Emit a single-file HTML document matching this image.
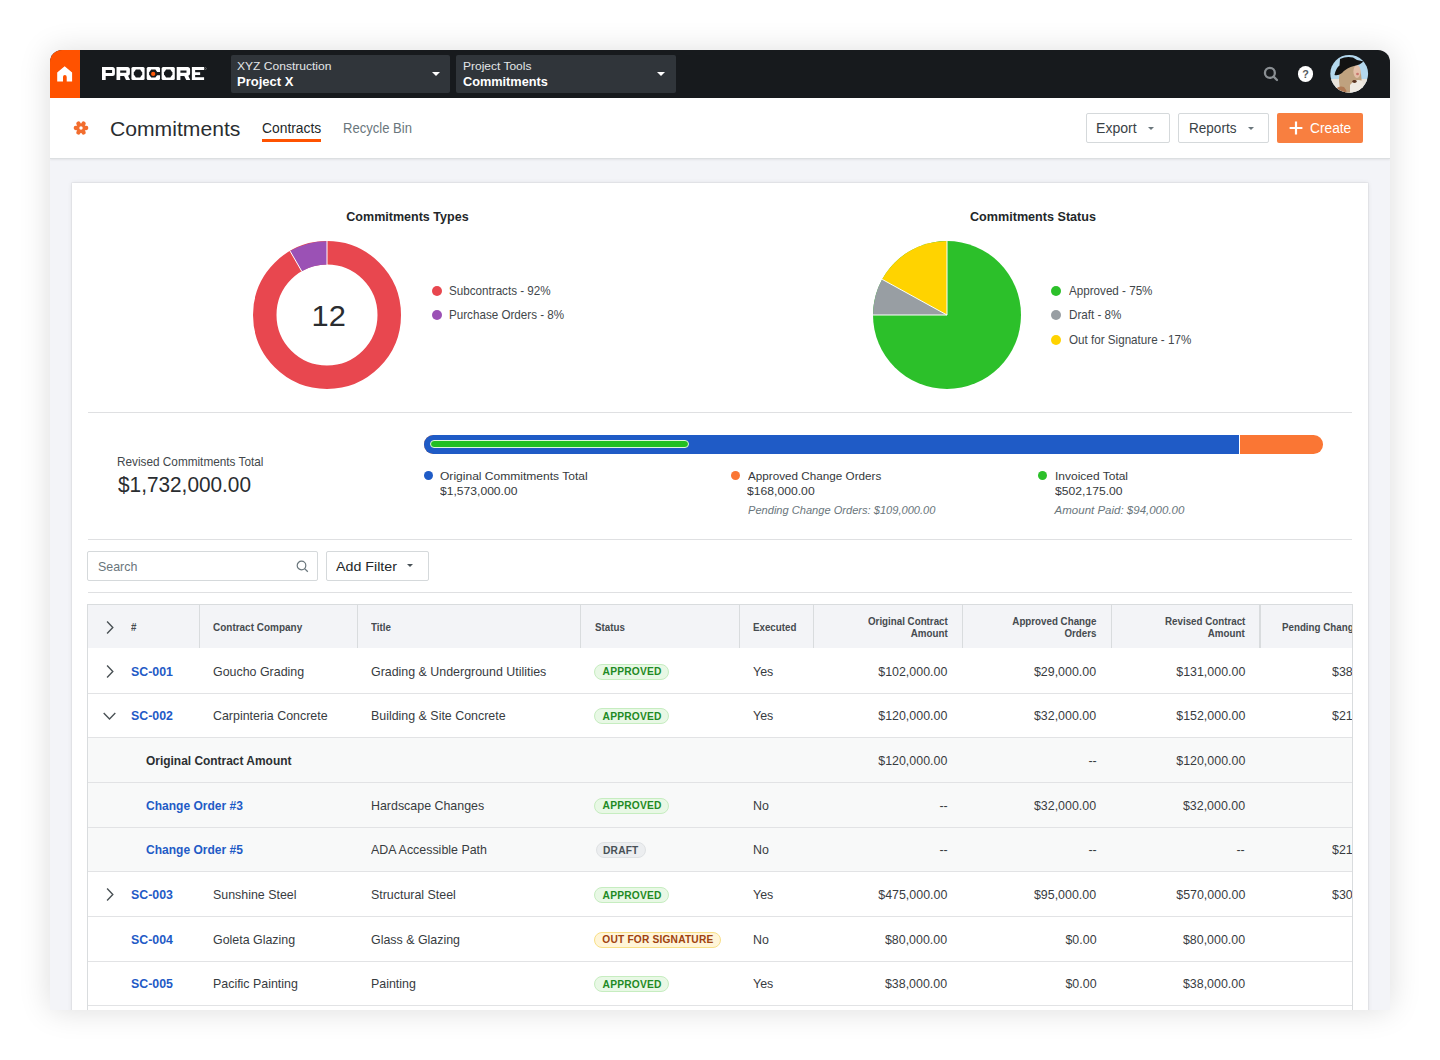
<!DOCTYPE html>
<html><head><meta charset="utf-8">
<style>
*{box-sizing:border-box;margin:0;padding:0}
html,body{width:1440px;height:1060px;overflow:hidden;background:#fff;font-family:"Liberation Sans",sans-serif;color:#232729}
.a{position:absolute;white-space:nowrap}
.t{line-height:1}
.dot{border-radius:50%}
#shadow{position:absolute;left:50px;top:50px;width:1340px;height:958px;background:#f4f5f7;box-shadow:0 2px 30px rgba(0,0,0,.14)}
#clip{position:absolute;left:0;top:0;width:1440px;height:1060px;clip-path:inset(50px 50px 50px 50px round 12px 12px 0 0)}

</style></head>
<body>
<div id="shadow"></div>
<div id="clip">
<div class="a" style="left:50.00px;top:50.00px;width:1340.00px;height:960.00px;background:#f3f4f8"></div>
<div class="a" style="left:50.00px;top:50.00px;width:1340.00px;height:48.00px;background:#171a1d"></div>
<div class="a" style="left:50.00px;top:50.00px;width:30.00px;height:48.00px;background:#ff5200"></div>
<svg class="a" style="left:57px;top:66px" width="16" height="16" viewBox="0 0 16 16"><path d="M7.65 0.2 L15.1 6.5 V15.4 H9.7 V11 Q9.7 9.1 7.85 9.1 Q6 9.1 6 11 V15.4 H0.2 V6.5 Z" fill="#fff"/></svg>
<svg class="a" style="left:101.9px;top:66.9px" width="106" height="14" viewBox="0 0 106 14"><g fill="#fff"><path fill-rule="evenodd" d="M0 0H10.4Q12.9 0 12.9 2.5V6.4Q12.9 8.9 10.4 8.9H3.7V13.1H0Z M3.7 3.1V6H10.1V3.1Z"/><path fill-rule="evenodd" transform="translate(14.5 0)" d="M0 0H10.9Q13.4 0 13.4 2.5V6.2Q13.4 8.2 11.6 8.8L13.6 13.1H9.5L7.6 9H3.7V13.1H0Z M3.7 3.4V5.8H9.8V3.4Z"/><path transform="translate(29.4 0)" d="M1.5 0H11.7Q13.2 0 13.2 1.5V11.6Q13.2 13.1 11.7 13.1H1.5Q0 13.1 0 11.6V1.5Q0 0 1.5 0Z"/><path transform="translate(44.7 0)" d="M1.5 0H11.8Q13.3 0 13.3 1.5V11.6Q13.3 13.1 11.8 13.1H1.5Q0 13.1 0 11.6V1.5Q0 0 1.5 0Z"/><path transform="translate(59.6 0)" d="M1.5 0H11.7Q13.2 0 13.2 1.5V11.6Q13.2 13.1 11.7 13.1H1.5Q0 13.1 0 11.6V1.5Q0 0 1.5 0Z"/><path fill-rule="evenodd" transform="translate(74.7 0)" d="M0 0H10.9Q13.4 0 13.4 2.5V6.2Q13.4 8.2 11.6 8.8L13.6 13.1H9.5L7.6 9H3.7V13.1H0Z M3.7 3.4V5.8H9.8V3.4Z"/><path transform="translate(89.85 0)" d="M0 0H12.25V3H3.3V5.3H8.3V7.9H3.3V10.3H12.25V13.1H0Z"/></g><g fill="#171a1d"><path transform="translate(29.4 0)" d="M4.5 2.6L2.4 5.6V7.5L4.5 10.5H8.7L10.8 7.5V5.6L8.7 2.6Z"/><path transform="translate(44.7 0)" d="M4.5 2.6L2.4 5.6V7.5L4.5 10.5H8.7L10.8 7.5V5.6L8.7 2.6Z"/><path transform="translate(44.7 0)" d="M8.6 4.9H13.4V8.2H8.6Z"/><path transform="translate(59.6 0)" d="M4.5 2.6L2.4 5.6V7.5L4.5 10.5H8.7L10.8 7.5V5.6L8.7 2.6Z"/></g><circle cx="51.2" cy="6.9" r="2.15" fill="#ff5a0a"/><circle cx="103.4" cy="1.6" r="1" fill="none" stroke="#999" stroke-width="0.5"/></svg>
<div class="a" style="left:231.00px;top:55.00px;width:219.00px;height:37.50px;background:#30353a;border-radius:2px"></div>
<div class="a t" style="left:237.38px;top:61.00px;font-size:11.5px;color:#e3e6e8;transform:scaleX(1.0479);transform-origin:left">XYZ Construction</div>
<div class="a t" style="left:237.32px;top:75.00px;font-size:13.3px;color:#fff;font-weight:bold;transform:scaleX(0.9775);transform-origin:left">Project X</div>
<div class="a" style="left:431.50px;top:72.00px;width:0;height:0;border-left:4.0px solid transparent;border-right:4.0px solid transparent;border-top:4px solid #fff"></div>
<div class="a" style="left:456.00px;top:55.00px;width:219.50px;height:37.50px;background:#30353a;border-radius:2px"></div>
<div class="a t" style="left:462.98px;top:61.00px;font-size:11.5px;color:#e3e6e8;transform:scaleX(1.0426);transform-origin:left">Project Tools</div>
<div class="a t" style="left:462.94px;top:75.00px;font-size:13.3px;color:#fff;font-weight:bold;transform:scaleX(0.9566);transform-origin:left">Commitments</div>
<div class="a" style="left:656.50px;top:72.00px;width:0;height:0;border-left:4.0px solid transparent;border-right:4.0px solid transparent;border-top:4px solid #fff"></div>
<svg class="a" style="left:1262px;top:65px" width="18" height="18" viewBox="0 0 18 18"><circle cx="7.9" cy="7.9" r="4.95" fill="none" stroke="#8a8f93" stroke-width="2.3"/><path d="M11.6 11.6 L15 15" stroke="#8a8f93" stroke-width="2.3" stroke-linecap="round"/></svg>
<div class="a" style="left:1297.7px;top:66.2px;width:15.6px;height:15.6px;border-radius:50%;background:#fff"></div>
<div class="a t" style="left:1302.30px;top:69.00px;font-size:10.8px;color:#55595d;font-weight:bold">?</div>
<svg class="a" style="left:1326px;top:51px" width="46" height="46" viewBox="0 0 46 46"><defs><clipPath id="av"><circle cx="23.2" cy="22.8" r="18.9"/></clipPath></defs><g clip-path="url(#av)"><rect width="46" height="46" fill="#b3d8ee"/><rect y="28" width="46" height="18" fill="#e9e3da"/><path d="M13 27 Q13 17 21 14 Q30 12 34 19 Q37 28 34 35 Q29 42 21 42 Q13 40 13 30 Z" fill="#bfa27f"/><path d="M8 40 Q12 34 18 36 Q22 40 20 46 H8Z" fill="#b07a55"/><ellipse cx="31" cy="20.5" rx="3.6" ry="6.5" fill="#e3bfa8"/><ellipse cx="31.5" cy="23" rx="1.4" ry="1.2" fill="#c9756d"/><path d="M24 34 Q30 27 36 30 Q40 38 38 46 H24Z" fill="#efeae2"/><ellipse cx="28.5" cy="30.5" rx="2.2" ry="1.4" fill="#5a3420"/><path d="M8.5 24 Q10 17 13.5 14.5 L14 8 Q20 5 27 6.5 L31 9 Q35 9.5 37.5 10.5 Q34 14 28 15 Q21 16.5 16 22 Q12 25 8.5 24 Z" fill="#121212"/></g></svg>
<div class="a" style="left:50.00px;top:98.00px;width:1340.00px;height:60.80px;background:#fff;border-bottom:1px solid #dcdfe1;box-shadow:0 1px 2px rgba(0,0,0,.07)"></div>
<svg class="a" style="left:72.6px;top:119.9px" width="16" height="16" viewBox="0 0 16 16"><circle cx="8" cy="8" r="4" fill="#f26d2e"/><path d="M8 8L13.20 8.00M8 8L10.60 12.50M8 8L5.40 12.50M8 8L2.80 8.00M8 8L5.40 3.50M8 8L10.60 3.50" stroke="#f26d2e" stroke-width="4.3" stroke-linecap="round"/><circle cx="8" cy="8" r="1.7" fill="#fff"/></svg>
<div class="a t" style="left:109.73px;top:119.00px;font-size:20.5px;color:#2a2d30;transform:scaleX(1.0308);transform-origin:left">Commitments</div>
<div class="a t" style="left:261.77px;top:122.00px;font-size:13.8px;color:#232729;transform:scaleX(1.0036);transform-origin:left">Contracts</div>
<div class="a" style="left:262.00px;top:139.00px;width:59.00px;height:2.60px;background:#ff5200"></div>
<div class="a t" style="left:342.72px;top:122.00px;font-size:13.8px;color:#6a767c;transform:scaleX(0.9466);transform-origin:left">Recycle Bin</div>
<div class="a" style="left:1086.40px;top:113.00px;width:83.60px;height:30.00px;background:#fff;border:1px solid #d5d9db;border-radius:2px"></div>
<div class="a t" style="left:1096.16px;top:122.00px;font-size:13.8px;color:#3a4246;transform:scaleX(1.0204);transform-origin:left">Export</div>
<div class="a" style="left:1148.10px;top:126.75px;width:0;height:0;border-left:3.5px solid transparent;border-right:3.5px solid transparent;border-top:3.5px solid #6a767c"></div>
<div class="a" style="left:1178.20px;top:113.00px;width:91.30px;height:30.00px;background:#fff;border:1px solid #d5d9db;border-radius:2px"></div>
<div class="a t" style="left:1188.89px;top:122.00px;font-size:13.8px;color:#3a4246;transform:scaleX(0.9816);transform-origin:left">Reports</div>
<div class="a" style="left:1247.80px;top:126.75px;width:0;height:0;border-left:3.5px solid transparent;border-right:3.5px solid transparent;border-top:3.5px solid #6a767c"></div>
<div class="a" style="left:1277.20px;top:113.00px;width:85.50px;height:30.00px;background:#f87f40;border-radius:2px"></div>
<svg class="a" style="left:1289px;top:121px" width="14" height="14" viewBox="0 0 14 14"><path d="M7 0.6V13.4M0.6 7H13.4" stroke="#fff" stroke-width="2.2"/></svg>
<div class="a t" style="left:1310.18px;top:122.00px;font-size:13.8px;color:#fff;transform:scaleX(0.9958);transform-origin:left">Create</div>
<div class="a" style="left:72.00px;top:182.60px;width:1296.00px;height:847.40px;background:#fff;box-shadow:0 0 0 0.6px rgba(0,0,0,.06),0 0 5px rgba(0,0,0,.09)"></div>
<div class="a t" style="left:344.15px;top:210.00px;font-size:13px;color:#232729;font-weight:bold;transform:scaleX(0.9637);transform-origin:center">Commitments Types</div>
<svg class="a" style="left:253.2px;top:240.7px" width="148" height="148" viewBox="0 0 148 148"><circle cx="74" cy="74" r="62.25" fill="none" stroke="#e8474f" stroke-width="23.5"/><path d="M37.10 10.09 A73.8 73.8 0 0 1 74 0.2 L74 23.5 A50.5 50.5 0 0 0 48.75 30.27 Z" fill="#9b51b5"/><path d="M74 0V24 M37.10 10.09 L48.75 30.27" stroke="#fff" stroke-width="1"/></svg>
<div class="a t" style="left:311.61px;top:301.00px;font-size:30px;color:#2a2d30;transform:scaleX(1.0277);transform-origin:center">12</div>
<div class="a" style="left:431.60px;top:285.70px;width:10.20px;height:10.20px;border-radius:50%;background:#e8474f"></div>
<div class="a t" style="left:448.70px;top:285.00px;font-size:12.2px;color:#42474b;transform:scaleX(0.9562);transform-origin:left">Subcontracts - 92%</div>
<div class="a" style="left:431.60px;top:309.90px;width:10.20px;height:10.20px;border-radius:50%;background:#9b51b5"></div>
<div class="a t" style="left:448.70px;top:309.00px;font-size:12.2px;color:#42474b;transform:scaleX(0.9550);transform-origin:left">Purchase Orders - 8%</div>
<div class="a t" style="left:967.98px;top:210.00px;font-size:13px;color:#232729;font-weight:bold;transform:scaleX(0.9691);transform-origin:center">Commitments Status</div>
<svg class="a" style="left:872.8px;top:240.7px" width="148" height="148" viewBox="0 0 148 148"><circle cx="74" cy="74" r="74" fill="#2cc02a"/><path d="M74 74 L0.00 74.00 A74 74 0 0 1 9.15 38.35 Z" fill="#989ea3"/><path d="M74 74 L9.15 38.35 A74 74 0 0 1 74 0 Z" fill="#ffd300"/><path d="M74 0V74H0 M74 74 L9.15 38.35" stroke="#fff" stroke-width="1" fill="none"/></svg>
<div class="a" style="left:1050.90px;top:285.70px;width:10.20px;height:10.20px;border-radius:50%;background:#2cc02a"></div>
<div class="a t" style="left:1068.70px;top:285.00px;font-size:12.2px;color:#42474b;transform:scaleX(0.9550);transform-origin:left">Approved - 75%</div>
<div class="a" style="left:1050.90px;top:309.90px;width:10.20px;height:10.20px;border-radius:50%;background:#989ea3"></div>
<div class="a t" style="left:1068.70px;top:309.00px;font-size:12.2px;color:#42474b;transform:scaleX(0.9550);transform-origin:left">Draft - 8%</div>
<div class="a" style="left:1050.90px;top:334.90px;width:10.20px;height:10.20px;border-radius:50%;background:#ffd300"></div>
<div class="a t" style="left:1068.70px;top:334.00px;font-size:12.2px;color:#42474b;transform:scaleX(0.9550);transform-origin:left">Out for Signature - 17%</div>
<div class="a" style="left:88.00px;top:411.80px;width:1264.00px;height:1.00px;background:#dfe0e2"></div>
<div class="a t" style="left:116.59px;top:456.00px;font-size:12.2px;color:#42474b;transform:scaleX(0.9664);transform-origin:left">Revised Commitments Total</div>
<div class="a t" style="left:117.95px;top:475.00px;font-size:21.5px;color:#2a2d30;transform:scaleX(0.9672);transform-origin:left">$1,732,000.00</div>
<div class="a" style="left:424.4px;top:435px;width:898.4px;height:18.7px;border-radius:9.35px;background:#fa7634;overflow:hidden"><div class="a" style="left:0;top:0;width:815.6px;height:18.7px;background:#1f5bc6;border-right:1.2px solid #fff"></div><div class="a" style="left:5.2px;top:5.3px;width:259.3px;height:8px;border-radius:4px;background:#22bf22;border:1px solid #dff7dc"></div></div>
<div class="a" style="left:424.00px;top:470.60px;width:9.20px;height:9.20px;border-radius:50%;background:#1f5bc6"></div>
<div class="a t" style="left:440.38px;top:471.00px;font-size:11.8px;color:#35393c;transform:scaleX(1.0209);transform-origin:left">Original Commitments Total</div>
<div class="a t" style="left:440.37px;top:486.00px;font-size:11.8px;color:#35393c;transform:scaleX(1.0265);transform-origin:left">$1,573,000.00</div>
<div class="a" style="left:731.10px;top:470.60px;width:9.20px;height:9.20px;border-radius:50%;background:#fa7634"></div>
<div class="a t" style="left:747.50px;top:471.00px;font-size:11.8px;color:#35393c;transform:scaleX(0.9916);transform-origin:left">Approved Change Orders</div>
<div class="a t" style="left:747.47px;top:486.00px;font-size:11.8px;color:#35393c;transform:scaleX(1.0313);transform-origin:left">$168,000.00</div>
<div class="a t" style="left:747.53px;top:505.00px;font-size:11.5px;color:#6a767c;font-style:italic;transform:scaleX(0.9643);transform-origin:left">Pending Change Orders: $109,000.00</div>
<div class="a" style="left:1038.20px;top:470.60px;width:9.20px;height:9.20px;border-radius:50%;background:#2cc02a"></div>
<div class="a t" style="left:1054.58px;top:471.00px;font-size:11.8px;color:#35393c;transform:scaleX(1.0155);transform-origin:left">Invoiced Total</div>
<div class="a t" style="left:1054.57px;top:486.00px;font-size:11.8px;color:#35393c;transform:scaleX(1.0297);transform-origin:left">$502,175.00</div>
<div class="a t" style="left:1054.61px;top:505.00px;font-size:11.5px;color:#6a767c;font-style:italic">Amount Paid: $94,000.00</div>
<div class="a" style="left:88.00px;top:539.10px;width:1264.00px;height:1.00px;background:#dfe0e2"></div>
<div class="a" style="left:87.20px;top:551.20px;width:230.60px;height:29.60px;background:#fff;border:1px solid #d5d9db;border-radius:2px"></div>
<div class="a t" style="left:97.96px;top:560.00px;font-size:13px;color:#6a767c;transform:scaleX(0.9550);transform-origin:left">Search</div>
<svg class="a" style="left:296px;top:559.5px" width="13" height="13" viewBox="0 0 13 13"><circle cx="5.5" cy="5.5" r="4.3" fill="none" stroke="#6a767c" stroke-width="1.2"/><path d="M8.6 8.6L11.8 11.8" stroke="#6a767c" stroke-width="1.3"/></svg>
<div class="a" style="left:325.80px;top:551.20px;width:103.50px;height:29.60px;background:#fff;border:1px solid #d5d9db;border-radius:2px"></div>
<div class="a t" style="left:335.55px;top:560.00px;font-size:13px;color:#232729;transform:scaleX(1.0947);transform-origin:left">Add Filter</div>
<div class="a" style="left:406.70px;top:564.25px;width:0;height:0;border-left:3.5px solid transparent;border-right:3.5px solid transparent;border-top:3.5px solid #485156"></div>
<div class="a" style="left:88.00px;top:592.00px;width:1264.00px;height:1.00px;background:#dfe0e2"></div>
<div class="a" style="left:88.00px;top:605.00px;width:1264.00px;height:43.40px;background:#f3f4f7"></div>
<div class="a" style="left:87.00px;top:604.00px;width:1265.50px;height:1.00px;background:#d9dcde"></div>
<div class="a" style="left:87.00px;top:605.00px;width:1.00px;height:405.00px;background:#d9dcde"></div>
<div class="a" style="left:1351.50px;top:605.00px;width:1.00px;height:405.00px;background:#d9dcde"></div>
<div class="a" style="left:88.00px;top:647.80px;width:1264.00px;height:1.20px;background:#d9dcde"></div>
<div class="a" style="left:198.70px;top:605.00px;width:1.20px;height:43.40px;background:#d9dcde"></div>
<div class="a" style="left:356.70px;top:605.00px;width:1.20px;height:43.40px;background:#d9dcde"></div>
<div class="a" style="left:580.30px;top:605.00px;width:1.20px;height:43.40px;background:#d9dcde"></div>
<div class="a" style="left:738.50px;top:605.00px;width:1.20px;height:43.40px;background:#d9dcde"></div>
<div class="a" style="left:812.70px;top:605.00px;width:1.20px;height:43.40px;background:#d9dcde"></div>
<div class="a" style="left:961.60px;top:605.00px;width:1.20px;height:43.40px;background:#d9dcde"></div>
<div class="a" style="left:1110.50px;top:605.00px;width:1.20px;height:43.40px;background:#d9dcde"></div>
<div class="a" style="left:1259.40px;top:605.00px;width:1.20px;height:43.40px;background:#d9dcde"></div>
<svg class="a" style="left:105.50px;top:620.50px" width="8" height="13" viewBox="0 0 8 13"><path d="M1.1 0.6L6.8 6.5L1.1 12.4" fill="none" stroke="#4a5155" stroke-width="1.4"/></svg>
<div class="a t" style="left:131.21px;top:622.00px;font-size:10.5px;color:#464b4f;font-weight:bold;transform:scaleX(0.9300);transform-origin:left">#</div>
<div class="a t" style="left:213.20px;top:622.00px;font-size:10.5px;color:#464b4f;font-weight:bold;transform:scaleX(0.9495);transform-origin:left">Contract Company</div>
<div class="a t" style="left:371.41px;top:622.00px;font-size:10.5px;color:#464b4f;font-weight:bold;transform:scaleX(0.9300);transform-origin:left">Title</div>
<div class="a t" style="left:594.91px;top:622.00px;font-size:10.5px;color:#464b4f;font-weight:bold;transform:scaleX(0.9300);transform-origin:left">Status</div>
<div class="a t" style="left:753.21px;top:622.00px;font-size:10.5px;color:#464b4f;font-weight:bold;transform:scaleX(0.9300);transform-origin:left">Executed</div>
<div class="a t" style="left:861.52px;top:616.00px;font-size:10.5px;color:#464b4f;font-weight:bold;transform:scaleX(0.9300);transform-origin:right">Original Contract</div>
<div class="a t" style="left:907.61px;top:628.00px;font-size:10.5px;color:#464b4f;font-weight:bold;transform:scaleX(0.9300);transform-origin:right">Amount</div>
<div class="a t" style="left:1005.75px;top:616.00px;font-size:10.5px;color:#464b4f;font-weight:bold;transform:scaleX(0.9300);transform-origin:right">Approved Change</div>
<div class="a t" style="left:1061.75px;top:628.00px;font-size:10.5px;color:#464b4f;font-weight:bold;transform:scaleX(0.9300);transform-origin:right">Orders</div>
<div class="a t" style="left:1158.63px;top:616.00px;font-size:10.5px;color:#464b4f;font-weight:bold;transform:scaleX(0.9300);transform-origin:right">Revised Contract</div>
<div class="a t" style="left:1205.31px;top:628.00px;font-size:10.5px;color:#464b4f;font-weight:bold;transform:scaleX(0.9300);transform-origin:right">Amount</div>
<div class="a" style="left:88.00px;top:648.40px;width:1263.50px;height:44.67px;background:#fff"></div>
<svg class="a" style="left:105.60px;top:665.03px" width="8" height="13" viewBox="0 0 8 13"><path d="M1.1 0.6L6.8 6.5L1.1 12.4" fill="none" stroke="#4a5155" stroke-width="1.4"/></svg>
<div class="a t" style="left:131.06px;top:665.00px;font-size:13px;color:#1f5bc6;font-weight:bold;transform:scaleX(0.9502);transform-origin:left">SC-001</div>
<div class="a t" style="left:213.06px;top:665.00px;font-size:13px;color:#383c3f;transform:scaleX(0.9550);transform-origin:left">Goucho Grading</div>
<div class="a t" style="left:371.46px;top:665.00px;font-size:13px;color:#383c3f;transform:scaleX(0.9550);transform-origin:left">Grading &amp; Underground Utilities</div>
<div class="a" style="left:594.20px;top:663.63px;width:75.00px;height:16.00px;border-radius:8px;background:#e8f8e5;border:1px solid #c6edc0"></div>
<div class="a t" style="left:600.60px;top:666.00px;font-size:10.8px;color:#1f8a24;font-weight:bold;letter-spacing:0.2px;transform:scaleX(0.9490);transform-origin:center">APPROVED</div>
<div class="a t" style="left:753.06px;top:665.00px;font-size:13px;color:#383c3f;transform:scaleX(0.9550);transform-origin:left">Yes</div>
<div class="a t" style="left:875.15px;top:665.00px;font-size:13px;color:#383c3f;transform:scaleX(0.9550);transform-origin:right">$102,000.00</div>
<div class="a t" style="left:1031.27px;top:665.00px;font-size:13px;color:#383c3f;transform:scaleX(0.9550);transform-origin:right">$29,000.00</div>
<div class="a t" style="left:1172.85px;top:665.00px;font-size:13px;color:#383c3f;transform:scaleX(0.9550);transform-origin:right">$131,000.00</div>
<div class="a" style="left:88.00px;top:693.07px;width:1263.50px;height:44.67px;background:#fff"></div>
<svg class="a" style="left:103.20px;top:711.80px" width="13" height="8" viewBox="0 0 13 8"><path d="M0.7 1.1L6.5 6.9L12.3 1.1" fill="none" stroke="#4a5155" stroke-width="1.4"/></svg>
<div class="a t" style="left:131.06px;top:709.00px;font-size:13px;color:#1f5bc6;font-weight:bold;transform:scaleX(0.9502);transform-origin:left">SC-002</div>
<div class="a t" style="left:213.06px;top:709.00px;font-size:13px;color:#383c3f;transform:scaleX(0.9550);transform-origin:left">Carpinteria Concrete</div>
<div class="a t" style="left:371.46px;top:709.00px;font-size:13px;color:#383c3f;transform:scaleX(0.9550);transform-origin:left">Building &amp; Site Concrete</div>
<div class="a" style="left:594.20px;top:708.30px;width:75.00px;height:16.00px;border-radius:8px;background:#e8f8e5;border:1px solid #c6edc0"></div>
<div class="a t" style="left:600.60px;top:711.00px;font-size:10.8px;color:#1f8a24;font-weight:bold;letter-spacing:0.2px;transform:scaleX(0.9490);transform-origin:center">APPROVED</div>
<div class="a t" style="left:753.06px;top:709.00px;font-size:13px;color:#383c3f;transform:scaleX(0.9550);transform-origin:left">Yes</div>
<div class="a t" style="left:875.15px;top:709.00px;font-size:13px;color:#383c3f;transform:scaleX(0.9550);transform-origin:right">$120,000.00</div>
<div class="a t" style="left:1031.27px;top:709.00px;font-size:13px;color:#383c3f;transform:scaleX(0.9550);transform-origin:right">$32,000.00</div>
<div class="a t" style="left:1172.85px;top:709.00px;font-size:13px;color:#383c3f;transform:scaleX(0.9550);transform-origin:right">$152,000.00</div>
<div class="a" style="left:88.00px;top:737.74px;width:1263.50px;height:44.67px;background:#f8f9f9"></div>
<div class="a t" style="left:145.98px;top:754.00px;font-size:13px;color:#2b2f32;font-weight:bold;transform:scaleX(0.9181);transform-origin:left">Original Contract Amount</div>
<div class="a t" style="left:875.15px;top:754.00px;font-size:13px;color:#383c3f;transform:scaleX(0.9550);transform-origin:right">$120,000.00</div>
<div class="a t" style="left:1087.67px;top:754.00px;font-size:13px;color:#383c3f;transform:scaleX(0.9550);transform-origin:right">--</div>
<div class="a t" style="left:1172.85px;top:754.00px;font-size:13px;color:#383c3f;transform:scaleX(0.9550);transform-origin:right">$120,000.00</div>
<div class="a" style="left:88.00px;top:782.41px;width:1263.50px;height:44.67px;background:#f8f9f9"></div>
<div class="a t" style="left:145.88px;top:799.00px;font-size:13px;color:#1f5bc6;font-weight:bold;transform:scaleX(0.9244);transform-origin:left">Change Order #3</div>
<div class="a t" style="left:371.46px;top:799.00px;font-size:13px;color:#383c3f;transform:scaleX(0.9550);transform-origin:left">Hardscape Changes</div>
<div class="a" style="left:594.20px;top:797.64px;width:75.00px;height:16.00px;border-radius:8px;background:#e8f8e5;border:1px solid #c6edc0"></div>
<div class="a t" style="left:600.60px;top:800.00px;font-size:10.8px;color:#1f8a24;font-weight:bold;letter-spacing:0.2px;transform:scaleX(0.9490);transform-origin:center">APPROVED</div>
<div class="a t" style="left:753.06px;top:799.00px;font-size:13px;color:#383c3f;transform:scaleX(0.9550);transform-origin:left">No</div>
<div class="a t" style="left:938.77px;top:799.00px;font-size:13px;color:#383c3f;transform:scaleX(0.9550);transform-origin:right">--</div>
<div class="a t" style="left:1031.27px;top:799.00px;font-size:13px;color:#383c3f;transform:scaleX(0.9550);transform-origin:right">$32,000.00</div>
<div class="a t" style="left:1180.07px;top:799.00px;font-size:13px;color:#383c3f;transform:scaleX(0.9550);transform-origin:right">$32,000.00</div>
<div class="a" style="left:88.00px;top:827.08px;width:1263.50px;height:44.67px;background:#f8f9f9"></div>
<div class="a t" style="left:145.88px;top:843.00px;font-size:13px;color:#1f5bc6;font-weight:bold;transform:scaleX(0.9244);transform-origin:left">Change Order #5</div>
<div class="a t" style="left:371.46px;top:843.00px;font-size:13px;color:#383c3f;transform:scaleX(0.9550);transform-origin:left">ADA Accessible Path</div>
<div class="a" style="left:595.80px;top:842.31px;width:49.80px;height:16.00px;border-radius:8px;background:#eceef0;border:1px solid #dfe2e4"></div>
<div class="a t" style="left:601.90px;top:845.00px;font-size:10.8px;color:#485156;font-weight:bold;letter-spacing:0.2px;transform:scaleX(0.9422);transform-origin:center">DRAFT</div>
<div class="a t" style="left:753.06px;top:843.00px;font-size:13px;color:#383c3f;transform:scaleX(0.9550);transform-origin:left">No</div>
<div class="a t" style="left:938.77px;top:843.00px;font-size:13px;color:#383c3f;transform:scaleX(0.9550);transform-origin:right">--</div>
<div class="a t" style="left:1087.67px;top:843.00px;font-size:13px;color:#383c3f;transform:scaleX(0.9550);transform-origin:right">--</div>
<div class="a t" style="left:1236.47px;top:843.00px;font-size:13px;color:#383c3f;transform:scaleX(0.9550);transform-origin:right">--</div>
<div class="a" style="left:88.00px;top:871.75px;width:1263.50px;height:44.67px;background:#fff"></div>
<svg class="a" style="left:105.60px;top:888.38px" width="8" height="13" viewBox="0 0 8 13"><path d="M1.1 0.6L6.8 6.5L1.1 12.4" fill="none" stroke="#4a5155" stroke-width="1.4"/></svg>
<div class="a t" style="left:131.06px;top:888.00px;font-size:13px;color:#1f5bc6;font-weight:bold;transform:scaleX(0.9502);transform-origin:left">SC-003</div>
<div class="a t" style="left:213.06px;top:888.00px;font-size:13px;color:#383c3f;transform:scaleX(0.9550);transform-origin:left">Sunshine Steel</div>
<div class="a t" style="left:371.46px;top:888.00px;font-size:13px;color:#383c3f;transform:scaleX(0.9550);transform-origin:left">Structural Steel</div>
<div class="a" style="left:594.20px;top:886.99px;width:75.00px;height:16.00px;border-radius:8px;background:#e8f8e5;border:1px solid #c6edc0"></div>
<div class="a t" style="left:600.60px;top:890.00px;font-size:10.8px;color:#1f8a24;font-weight:bold;letter-spacing:0.2px;transform:scaleX(0.9490);transform-origin:center">APPROVED</div>
<div class="a t" style="left:753.06px;top:888.00px;font-size:13px;color:#383c3f;transform:scaleX(0.9550);transform-origin:left">Yes</div>
<div class="a t" style="left:875.15px;top:888.00px;font-size:13px;color:#383c3f;transform:scaleX(0.9550);transform-origin:right">$475,000.00</div>
<div class="a t" style="left:1031.27px;top:888.00px;font-size:13px;color:#383c3f;transform:scaleX(0.9550);transform-origin:right">$95,000.00</div>
<div class="a t" style="left:1172.85px;top:888.00px;font-size:13px;color:#383c3f;transform:scaleX(0.9550);transform-origin:right">$570,000.00</div>
<div class="a" style="left:88.00px;top:916.42px;width:1263.50px;height:44.67px;background:#fff"></div>
<div class="a t" style="left:131.06px;top:933.00px;font-size:13px;color:#1f5bc6;font-weight:bold;transform:scaleX(0.9502);transform-origin:left">SC-004</div>
<div class="a t" style="left:213.06px;top:933.00px;font-size:13px;color:#383c3f;transform:scaleX(0.9550);transform-origin:left">Goleta Glazing</div>
<div class="a t" style="left:371.46px;top:933.00px;font-size:13px;color:#383c3f;transform:scaleX(0.9550);transform-origin:left">Glass &amp; Glazing</div>
<div class="a" style="left:594.20px;top:931.65px;width:126.70px;height:16.00px;border-radius:8px;background:#fff5d8;border:1px solid #f8df86"></div>
<div class="a t" style="left:598.67px;top:934.00px;font-size:10.8px;color:#a0420e;font-weight:bold;letter-spacing:0.2px;transform:scaleX(0.9436);transform-origin:center">OUT FOR SIGNATURE</div>
<div class="a t" style="left:753.06px;top:933.00px;font-size:13px;color:#383c3f;transform:scaleX(0.9550);transform-origin:left">No</div>
<div class="a t" style="left:882.37px;top:933.00px;font-size:13px;color:#383c3f;transform:scaleX(0.9550);transform-origin:right">$80,000.00</div>
<div class="a t" style="left:1063.80px;top:933.00px;font-size:13px;color:#383c3f;transform:scaleX(0.9550);transform-origin:right">$0.00</div>
<div class="a t" style="left:1180.07px;top:933.00px;font-size:13px;color:#383c3f;transform:scaleX(0.9550);transform-origin:right">$80,000.00</div>
<div class="a" style="left:88.00px;top:961.09px;width:1263.50px;height:44.67px;background:#fff"></div>
<div class="a t" style="left:131.06px;top:977.00px;font-size:13px;color:#1f5bc6;font-weight:bold;transform:scaleX(0.9502);transform-origin:left">SC-005</div>
<div class="a t" style="left:213.06px;top:977.00px;font-size:13px;color:#383c3f;transform:scaleX(0.9550);transform-origin:left">Pacific Painting</div>
<div class="a t" style="left:371.46px;top:977.00px;font-size:13px;color:#383c3f;transform:scaleX(0.9550);transform-origin:left">Painting</div>
<div class="a" style="left:594.20px;top:976.32px;width:75.00px;height:16.00px;border-radius:8px;background:#e8f8e5;border:1px solid #c6edc0"></div>
<div class="a t" style="left:600.60px;top:979.00px;font-size:10.8px;color:#1f8a24;font-weight:bold;letter-spacing:0.2px;transform:scaleX(0.9490);transform-origin:center">APPROVED</div>
<div class="a t" style="left:753.06px;top:977.00px;font-size:13px;color:#383c3f;transform:scaleX(0.9550);transform-origin:left">Yes</div>
<div class="a t" style="left:882.37px;top:977.00px;font-size:13px;color:#383c3f;transform:scaleX(0.9550);transform-origin:right">$38,000.00</div>
<div class="a t" style="left:1063.80px;top:977.00px;font-size:13px;color:#383c3f;transform:scaleX(0.9550);transform-origin:right">$0.00</div>
<div class="a t" style="left:1180.07px;top:977.00px;font-size:13px;color:#383c3f;transform:scaleX(0.9550);transform-origin:right">$38,000.00</div>
<div class="a" style="left:88.00px;top:692.77px;width:1263.50px;height:1.00px;background:#e2e3e5"></div>
<div class="a" style="left:88.00px;top:737.44px;width:1263.50px;height:1.00px;background:#e2e3e5"></div>
<div class="a" style="left:88.00px;top:782.11px;width:1263.50px;height:1.00px;background:#e2e3e5"></div>
<div class="a" style="left:88.00px;top:826.78px;width:1263.50px;height:1.00px;background:#e2e3e5"></div>
<div class="a" style="left:88.00px;top:871.45px;width:1263.50px;height:1.00px;background:#e2e3e5"></div>
<div class="a" style="left:88.00px;top:916.12px;width:1263.50px;height:1.00px;background:#e2e3e5"></div>
<div class="a" style="left:88.00px;top:960.79px;width:1263.50px;height:1.00px;background:#e2e3e5"></div>
<div class="a" style="left:88.00px;top:1005.46px;width:1263.50px;height:1.00px;background:#e2e3e5"></div>
<div class="a" style="left:1260px;top:605px;width:91.5px;height:405px;overflow:hidden">
<div class="a t" style="left:21.91px;top:17.00px;font-size:10.5px;color:#464b4f;font-weight:bold;transform:scaleX(0.9300);transform-origin:left">Pending Change Orders</div>
<div class="a t" style="left:72.06px;top:60.00px;font-size:13px;color:#383c3f;transform:scaleX(0.9550);transform-origin:left">$38,000.00</div>
<div class="a t" style="left:72.06px;top:104.00px;font-size:13px;color:#383c3f;transform:scaleX(0.9550);transform-origin:left">$21,000.00</div>
<div class="a t" style="left:72.06px;top:238.00px;font-size:13px;color:#383c3f;transform:scaleX(0.9550);transform-origin:left">$21,000.00</div>
<div class="a t" style="left:72.06px;top:283.00px;font-size:13px;color:#383c3f;transform:scaleX(0.9550);transform-origin:left">$30,000.00</div>
</div>
</div>
</body></html>
